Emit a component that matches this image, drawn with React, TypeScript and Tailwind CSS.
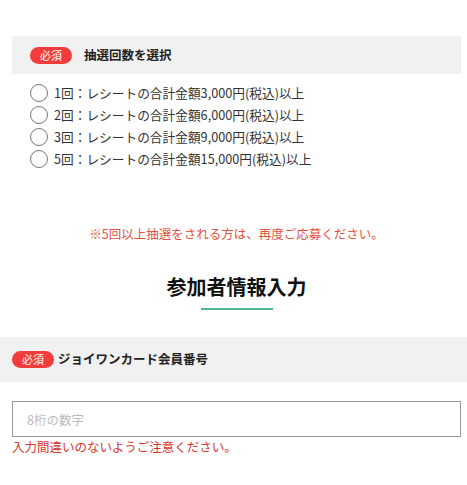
import { useState } from 'react'

const options = [
  '1回：レシートの合計金額3,000円(税込)以上',
  '2回：レシートの合計金額6,000円(税込)以上',
  '3回：レシートの合計金額9,000円(税込)以上',
  '5回：レシートの合計金額15,000円(税込)以上',
]

const Required = () => (
  <span className="inline-flex h-[17px] items-center rounded-full bg-[#f23c3c] px-[10px] text-[11px] leading-none text-white">
    必須
  </span>
)

export default function App() {
  const [selected, setSelected] = useState<number | null>(null)
  const [card, setCard] = useState('')

  return (
    <div className="min-h-[485px] bg-white pt-[36px] font-['Noto_Sans_CJK_JP','Noto_Sans',sans-serif] text-[#222]">
      <div className="pl-3 pr-[6px]">
        <div className="flex h-[38px] items-center gap-[12px] bg-[#f1f1f1] pl-[18px]">
          <Required />
          <span className="text-[12.5px] font-bold">抽選回数を選択</span>
        </div>
        <ul className="mt-[8px] pl-[18px]">
          {options.map((label, i) => (
            <li key={i} className="flex h-[22px] items-center">
              <button
                type="button"
                onClick={() => setSelected(i)}
                className="mr-[6px] flex h-[18px] w-[18px] items-center justify-center rounded-full border border-[#777] bg-white"
              >
                {selected === i && <span className="h-[10px] w-[10px] rounded-full bg-[#333]" />}
              </button>
              <span className="text-[12.7px] text-[#333]">{label}</span>
            </li>
          ))}
        </ul>
        <p className="mt-[55px] text-center text-[12.5px] text-[#e2503f]">
          ※5回以上抽選をされる方は、再度ご応募ください。
        </p>
      </div>

      <div className="mt-[28px] flex flex-col items-center pl-3 pr-[6px]">
        <h2 className="text-[20px] font-bold leading-[30px] text-[#111]">参加者情報入力</h2>
        <div className="mt-[6px] h-[2.5px] w-[72px] bg-[#4fb98d]" />
      </div>

      <div className="mt-[27px] flex h-[45px] items-center gap-[4px] bg-[#f1f1f1] pl-[12px]">
        <Required />
        <span className="text-[12.5px] font-bold">ジョイワンカード会員番号</span>
      </div>

      <div className="pl-3 pr-[6px] pt-[19px]">
        <input
          value={card}
          onChange={e => setCard(e.target.value)}
          placeholder="8桁の数字"
          className="block h-[36px] w-full border border-[#999] px-[14px] text-[12.5px] outline-none placeholder:text-[#bbb]"
        />
        <p className="mt-[1px] text-[12.5px] leading-[18px] text-[#d8362c]">
          入力間違いのないようご注意ください。
        </p>
      </div>
    </div>
  )
}
